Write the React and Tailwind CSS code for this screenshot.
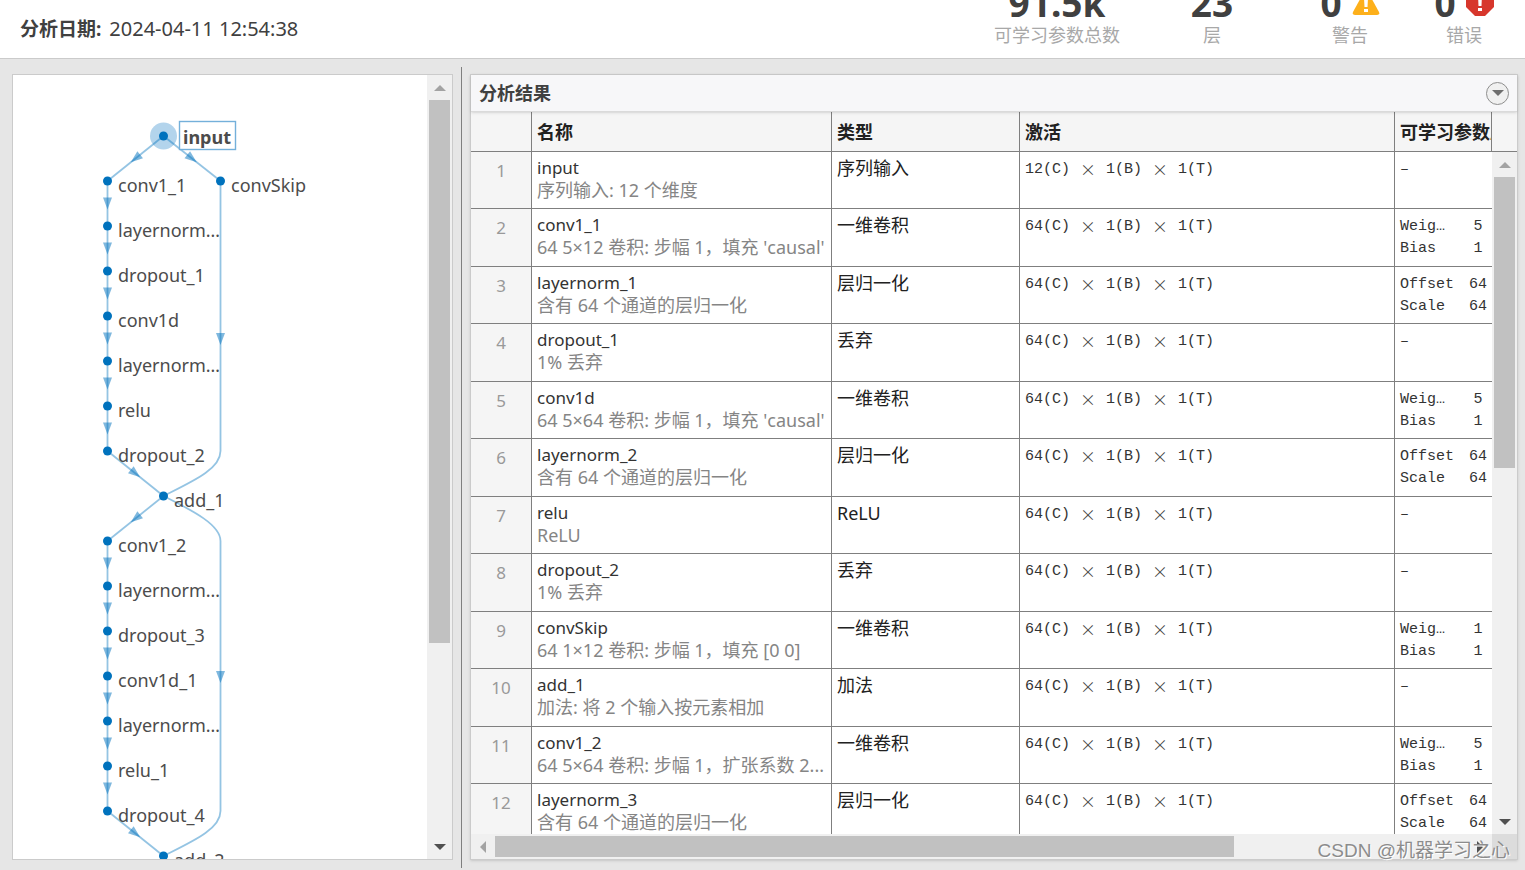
import React from 'react';
import clsx from 'clsx';

const STEP = 45;
const TOP = 61;
const COL = { main: 94, center: 150, skip: 207 };

const NODES = [
  { label: 'input', col: 'center', row: 0, selected: true },
  { label: 'conv1_1', col: 'main', row: 1 },
  { label: 'convSkip', col: 'skip', row: 1 },
  { label: 'layernorm…', col: 'main', row: 2 },
  { label: 'dropout_1', col: 'main', row: 3 },
  { label: 'conv1d', col: 'main', row: 4 },
  { label: 'layernorm…', col: 'main', row: 5 },
  { label: 'relu', col: 'main', row: 6 },
  { label: 'dropout_2', col: 'main', row: 7 },
  { label: 'add_1', col: 'center', row: 8 },
  { label: 'conv1_2', col: 'main', row: 9 },
  { label: 'layernorm…', col: 'main', row: 10 },
  { label: 'dropout_3', col: 'main', row: 11 },
  { label: 'conv1d_1', col: 'main', row: 12 },
  { label: 'layernorm…', col: 'main', row: 13 },
  { label: 'relu_1', col: 'main', row: 14 },
  { label: 'dropout_4', col: 'main', row: 15 },
  { label: 'add_2', col: 'center', row: 16 },
];

const rowY = (row) => TOP + row * STEP;

// Straight edges: [from column, from row, to column, to row]
const EDGES = [
  ['center', 0, 'main', 1],
  ['center', 0, 'skip', 1],
  ...[1, 2, 3, 4, 5, 6].map((r) => ['main', r, 'main', r + 1]),
  ['main', 7, 'center', 8],
  ['center', 8, 'main', 9],
  ...[9, 10, 11, 12, 13, 14].map((r) => ['main', r, 'main', r + 1]),
  ['main', 15, 'center', 16],
];

const WEIGHTS = (n) => [['Weig…', n], ['Bias', '1']];
const NORM = [['Offset', '64'], ['Scale', '64']];

const LAYERS = [
  { name: 'input', desc: '序列输入: 12 个维度', type: '序列输入', channels: 12 },
  { name: 'conv1_1', desc: "64 5×12 卷积: 步幅 1，填充 'causal'", type: '一维卷积', channels: 64, params: WEIGHTS('5') },
  { name: 'layernorm_1', desc: '含有 64 个通道的层归一化', type: '层归一化', channels: 64, params: NORM },
  { name: 'dropout_1', desc: '1% 丢弃', type: '丢弃', channels: 64 },
  { name: 'conv1d', desc: "64 5×64 卷积: 步幅 1，填充 'causal'", type: '一维卷积', channels: 64, params: WEIGHTS('5') },
  { name: 'layernorm_2', desc: '含有 64 个通道的层归一化', type: '层归一化', channels: 64, params: NORM },
  { name: 'relu', desc: 'ReLU', type: 'ReLU', channels: 64 },
  { name: 'dropout_2', desc: '1% 丢弃', type: '丢弃', channels: 64 },
  { name: 'convSkip', desc: '64 1×12 卷积: 步幅 1，填充 [0 0]', type: '一维卷积', channels: 64, params: WEIGHTS('1') },
  { name: 'add_1', desc: '加法: 将 2 个输入按元素相加', type: '加法', channels: 64 },
  { name: 'conv1_2', desc: '64 5×64 卷积: 步幅 1，扩张系数 2...', type: '一维卷积', channels: 64, params: WEIGHTS('5') },
  { name: 'layernorm_3', desc: '含有 64 个通道的层归一化', type: '层归一化', channels: 64, params: NORM },
];

const Arrow = ({ x, y, angle = 90 }) => (
  <path d="M-6 -4.5 L6 0 L-6 4.5 Z" transform={`translate(${x} ${y}) rotate(${angle})`} fill="#0072bd" fillOpacity="0.5" />
);

const Edge = ({ from, fromRow, to, toRow }) => {
  const [x1, y1, x2, y2] = [COL[from], rowY(fromRow), COL[to], rowY(toRow)];
  const angle = (Math.atan2(y2 - y1, x2 - x1) * 180) / Math.PI;
  return (
    <g>
      <line x1={x1} y1={y1} x2={x2} y2={y2} stroke="#0072bd" strokeOpacity="0.42" strokeWidth="1.8" />
      <Arrow x={(x1 + x2) / 2} y={(y1 + y2) / 2} angle={angle} />
    </g>
  );
};

const Graph = () => (
  <svg className="block h-full w-full" role="img" aria-label="网络图">
    <g transform="translate(0.5 0)">
      <circle cx={COL.center} cy={rowY(0)} r="13.5" fill="#b3d4ec" />
      {EDGES.map(([from, fromRow, to, toRow]) => (
        <Edge key={`${from}${fromRow}${to}`} from={from} fromRow={fromRow} to={to} toRow={toRow} />
      ))}
      <g fill="none" stroke="#0072bd" strokeOpacity="0.42" strokeWidth="1.8">
        <path d="M207 106 V376 C207 394 180 406 150 421" />
        <path d="M150 421 C180 436 207 450 207 466 V736 C207 754 180 766 150 781" />
      </g>
      <Arrow x={COL.skip} y={264} />
      <Arrow x={COL.skip} y={602} />
    </g>
    {NODES.map(({ label, col, row, selected }) => (
      <g key={col + row}>
        {selected && <rect x="166.5" y="46.5" width="56" height="28" fill="#fff" stroke="#74b0da" strokeWidth="1.4" />}
        <circle cx={COL[col] + 0.5} cy={rowY(row)} r="4.5" fill="#0072bd" />
        <text
          x={COL[col] + (selected ? 20 : 11)}
          y={rowY(row) + (selected ? 8 : 11)}
          className={clsx('text-[18px]', selected ? 'font-bold' : 'font-normal')}
          fill="#4c4c4c"
        >
          {label}
        </text>
      </g>
    ))}
  </svg>
);

const GLYPH = {
  up: 'M0 6 L6 0 L12 6 Z',
  down: 'M0 0 L12 0 L6 6 Z',
  left: 'M6 0 L6 12 L0 6 Z',
  right: 'M0 0 L6 6 L0 12 Z',
};

const ScrollButton = ({ dir, label, active }) => {
  const vertical = dir === 'up' || dir === 'down';
  return (
    <button
      type="button"
      aria-label={label}
      className={clsx('flex h-[25px] w-[24px] shrink-0 items-center justify-center', active ? 'text-[#505050]' : 'text-[#a3a3a3]')}
    >
      <svg width={vertical ? 12 : 6} height={vertical ? 6 : 12} fill="currentColor">
        <path d={GLYPH[dir]} />
      </svg>
    </button>
  );
};

const VerticalScrollbar = ({ thumb }) => (
  <div className="flex min-h-0 flex-1 flex-col items-center bg-[#f0f0f0]">
    <ScrollButton dir="up" label="向上滚动" />
    <div className="min-h-0 w-full flex-1 px-[2px]">
      <div className={clsx('w-full bg-[#c1c1c1]', thumb)} />
    </div>
    <ScrollButton dir="down" label="向下滚动" active />
  </div>
);

const Stat = ({ value, label, icon, className }) => (
  <div className={clsx('flex flex-col items-center', className)}>
    <div className="flex h-[40px] items-center gap-[10px] text-[37px] leading-[40px] font-bold text-[#404040]">
      {value}
      {icon}
    </div>
    <div className="text-[18px] leading-[24px] text-[#a8a8a8]">{label}</div>
  </div>
);

const WarningIcon = (
  <svg width="28" height="26" viewBox="0 0 28 26">
    <path d="M12 2 Q14 -1 16 2 L27 22 Q28 25 25 25 H3 Q0 25 1 22 Z" fill="#fdb01b" />
    <path d="M12 8 H16 L15.5 17 H12.5 Z M12 19 H16 V22 H12 Z" fill="#fff" />
  </svg>
);

const ErrorIcon = (
  <svg width="28" height="28" viewBox="0 0 28 28">
    <path d="M8 0 H20 L28 8 V18 L19 27 H9 L0 18 V8 Z" fill="#d7372c" />
    <path d="M12 6 H16 L15.5 17 H12.5 Z M12 19 H16 V22 H12 Z" fill="#fff" />
  </svg>
);

const Header = () => (
  <header className="flex h-[59px] shrink-0 items-end justify-between border-b border-[#cbcbcb] bg-white pr-[20px] pl-[20px]">
    <p className="flex gap-[8px] self-center text-[20px] leading-[28px] text-[#404040]">
      <span className="text-[19px] font-bold">分析日期:</span>
      <span>2024-04-11 12:54:38</span>
    </p>
    <div className="flex pb-[11px]">
      <Stat className="w-[180px]" value="91.5k" label="可学习参数总数" />
      <Stat className="w-[130px]" value="23" label="层" />
      <Stat className="w-[146px]" value="0" label="警告" icon={WarningIcon} />
      <Stat className="w-[82px]" value="0" label="错误" icon={ErrorIcon} />
    </div>
  </header>
);

const Times = () => (
  <span className="inline-block h-[22px] w-[18px] text-center align-top font-['Lato',sans-serif] text-[24px] leading-[20px] font-light text-[#444]">
    ×
  </span>
);

const LayerRow = ({ index, layer }) => (
  <tr className="h-[57px] align-top even:h-[58px]">
    <td className="border-r border-b border-[#7f7f7f] bg-[#f5f5f5] pt-[8px] text-center text-[17px] leading-[22px] text-[#999]">{index}</td>
    <td className="overflow-hidden border-r border-b border-[#7f7f7f] pt-[5px] pl-[5px] whitespace-nowrap">
      <div className="text-[17px] leading-[22px] text-[#333]">{layer.name}</div>
      <div className="text-[18px] leading-[22px] text-[#858585]">{layer.desc}</div>
    </td>
    <td className="border-r border-b border-[#7f7f7f] pt-[5px] pl-[5px] text-[18px] leading-[22px] text-[#212121]">{layer.type}</td>
    <td className="border-r border-b border-[#7f7f7f] pt-[7px] pl-[5px] font-['Liberation_Mono',monospace] text-[15px] leading-[22px] text-[#333]">
      {layer.channels}(C) <Times /> 1(B) <Times /> 1(T)
    </td>
    <td className="overflow-hidden border-b border-[#7f7f7f] pt-[7px] pl-[5px] font-['Liberation_Mono',monospace] text-[15px] leading-[22px] text-[#333]">
      {layer.params
        ? layer.params.map(([key, size]) => (
            <div key={key} className="flex">
              <span className="w-[69px]">{key}</span>
              <span className="w-[18px] text-center">{size}</span>
            </div>
          ))
        : '–'}
    </td>
  </tr>
);

const TH = 'overflow-hidden border-r border-b border-[#7f7f7f] pt-[2px] pl-[5px] text-left text-[18px] font-bold whitespace-nowrap text-[#212121]';

const Results = () => (
  <section className="flex min-w-0 flex-1 flex-col border border-[#cbcbcb] bg-white shadow-sm">
    <div className="z-10 flex h-[37px] shrink-0 items-center justify-between border-b border-[#dadada] bg-[#f7f7f9] pr-[8px] pl-[8px] shadow-sm">
      <h2 className="text-[18px] leading-[24px] font-bold text-[#404040]">分析结果</h2>
      <button
        type="button"
        aria-label="展开选项"
        className="flex h-[23px] w-[23px] items-center justify-center rounded-full border border-[#8e8e8e] bg-[#f0f0f0] text-[#6e6e6e]"
      >
        <svg width="12" height="6" fill="currentColor">
          <path d={GLYPH.down} />
        </svg>
      </button>
    </div>
    <div className="flex min-h-0 flex-1">
      <div className="min-w-0 flex-1 overflow-hidden">
        <table className="w-full table-fixed border-separate border-spacing-0">
          <thead>
            <tr className="h-[40px] bg-[#f5f5f5]">
              <th aria-label="序号" className="w-[61px] border-r border-b border-[#7f7f7f]" />
              <th className={clsx(TH, 'w-[300px]')}>名称</th>
              <th className={clsx(TH, 'w-[188px]')}>类型</th>
              <th className={clsx(TH, 'w-[375px]')}>激活</th>
              <th className={TH}>可学习参数属性</th>
            </tr>
          </thead>
          <tbody>
            {LAYERS.map((layer, i) => (
              <LayerRow key={layer.name} index={i + 1} layer={layer} />
            ))}
          </tbody>
        </table>
      </div>
      <div className="flex w-[25px] shrink-0 flex-col">
        <div className="h-[40px] shrink-0 border-b border-[#7f7f7f] bg-[#f5f5f5]" />
        <VerticalScrollbar thumb="h-[46%]" />
      </div>
    </div>
    <div className="flex h-[25px] shrink-0 items-center bg-[#f0f0f0]">
      <ScrollButton dir="left" label="向左滚动" />
      <div className="flex-1">
        <div className="h-[21px] w-[76%] bg-[#c1c1c1]" />
      </div>
      <ScrollButton dir="right" label="向右滚动" active />
      <div className="h-full w-[25px] bg-[#dcdcdc]" />
    </div>
  </section>
);

const App = () => (
  <div className="flex h-screen flex-col overflow-hidden bg-[#e6e6e6] font-['Noto_Sans','Noto_Sans_CJK_SC',sans-serif]">
    <Header />
    <main className="flex min-h-0 flex-1 pr-[7px] pl-[12px]">
      <section className="mt-[15px] mb-[10px] flex w-[441px] shrink-0 overflow-hidden border border-[#cbcbcb] bg-white">
        <div className="min-w-0 flex-1">
          <Graph />
        </div>
        <div className="flex w-[25px] shrink-0 flex-col">
          <VerticalScrollbar thumb="h-[74%]" />
        </div>
      </section>
      <div role="separator" aria-orientation="vertical" className="mx-[8px] mt-[8px] mb-[2px] w-px shrink-0 bg-[#7f7f7f]" />
      <div className="flex min-w-0 flex-1 pt-[15px] pb-[10px]">
        <Results />
      </div>
    </main>
    <div className="pointer-events-none absolute right-[15px] bottom-[5px] z-20 font-['Liberation_Sans','Noto_Sans_CJK_SC',sans-serif] text-[19px] leading-[28px] text-[#8c8c8c] [text-shadow:1px_1px_0_#fff]">
      CSDN @机器学习之心
    </div>
  </div>
);

export default App;
